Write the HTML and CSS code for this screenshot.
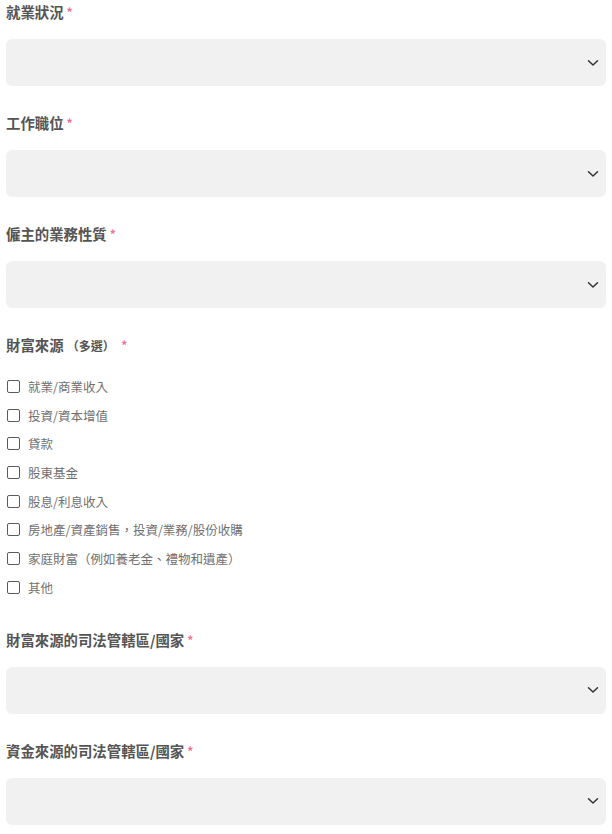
FILE: index.html
```html
<!DOCTYPE html>
<html lang="zh-Hant">
<head>
<meta charset="utf-8">
<link rel="stylesheet" href="styles.css">
</head>
<body>
<form class="form">
  <div class="field">
    <div class="label">就業狀況<span class="req">*</span></div>
    <div class="select"><svg class="chev" viewBox="0 0 12 8" width="12" height="8"><path d="M1.5 1.8 L6 6 L10.5 1.8" fill="none" stroke="#333" stroke-width="1.5" stroke-linecap="round" stroke-linejoin="round"/></svg></div>
  </div>
  <div class="field">
    <div class="label">工作職位<span class="req">*</span></div>
    <div class="select"><svg class="chev" viewBox="0 0 12 8" width="12" height="8"><path d="M1.5 1.8 L6 6 L10.5 1.8" fill="none" stroke="#333" stroke-width="1.5" stroke-linecap="round" stroke-linejoin="round"/></svg></div>
  </div>
  <div class="field">
    <div class="label">僱主的業務性質<span class="req">*</span></div>
    <div class="select"><svg class="chev" viewBox="0 0 12 8" width="12" height="8"><path d="M1.5 1.8 L6 6 L10.5 1.8" fill="none" stroke="#333" stroke-width="1.5" stroke-linecap="round" stroke-linejoin="round"/></svg></div>
  </div>
  <div class="field">
    <div class="label">財富來源 <span class="sub">（多選）</span> <span class="req">*</span></div>
    <div class="checks">
      <label class="check"><span class="box"></span>就業/商業收入</label>
      <label class="check"><span class="box"></span>投資/資本增值</label>
      <label class="check"><span class="box"></span>貸款</label>
      <label class="check"><span class="box"></span>股東基金</label>
      <label class="check"><span class="box"></span>股息/利息收入</label>
      <label class="check"><span class="box"></span>房地產/資產銷售，投資/業務/股份收購</label>
      <label class="check"><span class="box"></span>家庭財富（例如養老金、禮物和遺產）</label>
      <label class="check"><span class="box"></span>其他</label>
    </div>
  </div>
  <div class="field">
    <div class="label">財富來源的司法管轄區/國家<span class="req">*</span></div>
    <div class="select"><svg class="chev" viewBox="0 0 12 8" width="12" height="8"><path d="M1.5 1.8 L6 6 L10.5 1.8" fill="none" stroke="#333" stroke-width="1.5" stroke-linecap="round" stroke-linejoin="round"/></svg></div>
  </div>
  <div class="field">
    <div class="label">資金來源的司法管轄區/國家<span class="req">*</span></div>
    <div class="select"><svg class="chev" viewBox="0 0 12 8" width="12" height="8"><path d="M1.5 1.8 L6 6 L10.5 1.8" fill="none" stroke="#333" stroke-width="1.5" stroke-linecap="round" stroke-linejoin="round"/></svg></div>
  </div>
</form>
</body>
</html>
```
FILE: styles.css
```css
html, body {
  margin: 0;
  padding: 0;
  background: #fff;
}
body {
  font-family: "Noto Sans CJK TC", "Noto Sans", sans-serif;
  color: #555;
}
.form {
  padding: 0 6px;
  display: flex;
  flex-direction: column;
  gap: 25px;
}
.label {
  font-size: 14.4px;
  font-weight: 700;
  line-height: 24px;
  height: 24px;
  color: #555;
}
.req {
  color: #f0709a;
  font-size: 12px;
  margin-left: 3px;
  vertical-align: 1px;
}
.sub {
  font-size: 12px;
  margin-left: 0;
}
.select {
  margin-top: 15px;
  height: 47px;
  background: #f1f1f1;
  border-radius: 6px;
  display: flex;
  align-items: center;
  justify-content: flex-end;
  padding-right: 7px;
}
.chev {
  display: block;
}
.checks {
  margin-top: 15px;
  margin-bottom: 1px;
  display: flex;
  flex-direction: column;
}
.check {
  height: 28.7px;
  display: flex;
  align-items: center;
  font-size: 12.5px;
  color: #707070;
}
.box {
  width: 11px;
  height: 11px;
  border: 1.3px solid #5a5a5a;
  border-radius: 2px;
  margin-left: 1px;
  margin-right: 8px;
  flex: none;
}
```
